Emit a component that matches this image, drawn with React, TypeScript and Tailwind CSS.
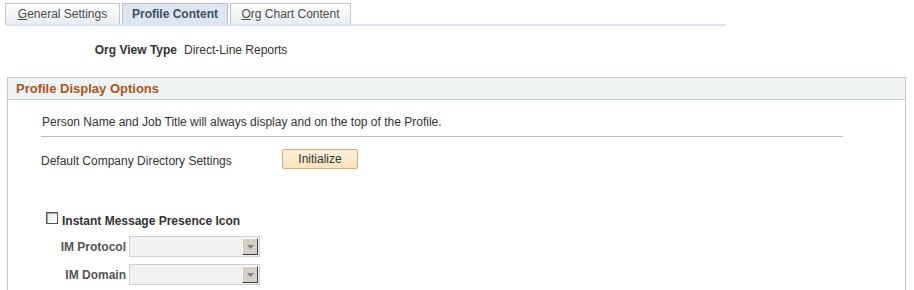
export default function App() {
  return (
    <div className="w-[914px] h-[290px] overflow-hidden bg-white text-[12px] text-[#333] font-['Liberation_Sans',Arial,sans-serif]">
      {/* Tabs */}
      <div className="pl-[5px] pt-[3px] flex items-end">
        <div className="flex w-[721px] border-b-[2px] border-[#dae5f2]">
          <div className="h-[21px] w-[115px] flex items-center justify-center border border-b-0 border-[#c3c6cb] bg-gradient-to-b from-white to-[#e9edf2] text-[#4a4a4a]">
            <span><span className="underline">G</span>eneral Settings</span>
          </div>
          <div className="ml-[2px] h-[21px] w-[106px] flex items-center justify-center border border-b-0 border-[#b7c2cf] bg-[#dde6f0] font-bold text-[#3e4f63]">
            Profile Content
          </div>
          <div className="ml-[2px] h-[21px] w-[121px] flex items-center justify-center border border-b-0 border-[#c3c6cb] bg-gradient-to-b from-white to-[#e9edf2] text-[#4a4a4a]">
            <span><span className="underline">O</span>rg Chart Content</span>
          </div>
        </div>
      </div>

      {/* Org view type */}
      <div className="mt-[16px] flex items-center h-[16px]">
        <span className="w-[177px] text-right font-bold">Org View Type</span>
        <span className="ml-[7px]">Direct-Line Reports</span>
      </div>

      {/* Group box */}
      <div className="mt-[19px] ml-[7px] w-[899px] border-l border-r border-[#c8c8c8] h-[300px]">
        <div className="h-[23px] bg-[#f0f3f4] border-t border-b border-[#c8cbcd] flex items-center pl-[8px]">
          <span className="text-[13px] font-bold text-[#a9561e]">Profile Display Options</span>
        </div>
        <div className="pl-[33px]">
          <div className="mt-[13px] w-[802px] pb-[5px] border-b border-[#bdbdbd] pl-[1px]">
            Person Name and Job Title will always display and on the top of the Profile.
          </div>
          <div className="mt-[11px] flex items-center">
            <span className="w-[241px] pt-[4px]">Default Company Directory Settings</span>
            <button className="h-[20px] w-[76px] rounded-[2px] border border-[#e0aa73] bg-gradient-to-b from-[#fdf0dc] to-[#fbe3be] text-[12px] text-[#333] font-['Liberation_Sans',Arial,sans-serif]">
              Initialize
            </button>
          </div>
          <div className="mt-[42px] pl-[5px] flex items-center">
            <span className="mb-[6px] w-[12px] h-[12px] border border-[#555] bg-gradient-to-br from-[#e6e6e6] to-white shadow-[inset_1px_1px_0_#aaa]" />
            <span className="ml-[4px] font-bold">Instant Message Presence Icon</span>
          </div>
          <div className="mt-[6px] flex flex-col gap-[7px]">
            {['IM Protocol', 'IM Domain'].map((l) => (
              <div key={l} className="flex items-center">
                <span className="w-[85px] text-right font-bold text-[#555]">{l}</span>
                <div className="ml-[3px] w-[131px] h-[21px] border border-[#cfcfcf] bg-[#f1f1f1] flex justify-end items-center pr-[1px]">
                  <div className="w-[16px] h-[17px] bg-[#d4d0c8] border-t border-l border-white border-r border-b border-r-[#404040] border-b-[#404040] flex items-center justify-center">
                    <svg width="7" height="4" viewBox="0 0 7 4"><path d="M0 0h7L3.5 4z" fill="#808080" /></svg>
                  </div>
                </div>
              </div>
            ))}
          </div>
        </div>
      </div>
    </div>
  )
}
